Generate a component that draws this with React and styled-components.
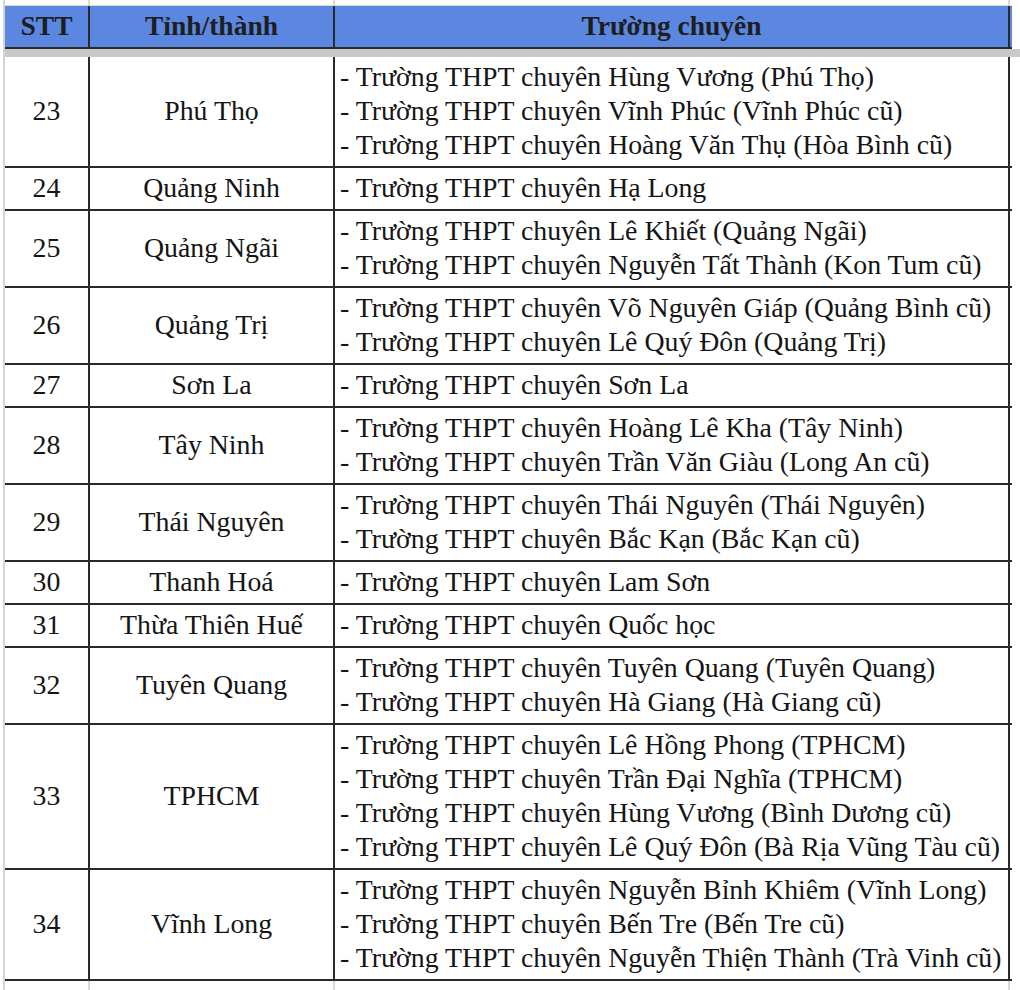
import React from 'react'
import styled, { createGlobalStyle } from 'styled-components'

const GlobalStyle = createGlobalStyle`
  html, body {
    margin: 0;
    padding: 0;
    background: #ffffff;
  }
  body {
    font-family: "Liberation Serif", "Times New Roman", serif;
    color: #111;
  }
`

const COLS = '85px 245px 675px'

const Sheet = styled.div`
  width: 1020px;
  height: 990px;
  overflow: hidden;
  box-sizing: border-box;
  padding-left: 3px;
  background: #fff;
`

const Frame = styled.div`
  border-left: 2px solid #d4d4d4;
  width: 1009px;
  height: 990px;
  box-sizing: border-box;
`

const GhostRow = styled.div`
  display: grid;
  grid-template-columns: ${COLS} 10px;
  height: ${({ $h }) => $h}px;
  border-bottom: ${({ $line }) => ($line ? '1px solid #d8d8d8' : 'none')};
`

const GhostCell = styled.div`
  border-right: 2px solid #dadada;
`

const HeaderRow = styled.div`
  display: grid;
  grid-template-columns: ${COLS};
  height: 43px;
  background: #5b87e1;
  border-bottom: 2px solid #2a2a2a;
  box-sizing: border-box;
  width: 1007px;
`

const HeaderCell = styled.div`
  display: flex;
  align-items: center;
  justify-content: center;
  font-weight: 700;
  font-size: 27.5px;
  color: #1e1e1e;
  border-right: 2px solid #2a2a2a;
  padding-bottom: 1px;
`

const FreezeBar = styled.div`
  height: 8px;
  background: #c9c9c9;
  width: 1020px;
`

const Row = styled.div`
  display: grid;
  grid-template-columns: ${COLS};
  border-bottom: 2px solid #2a2a2a;
  width: 1007px;
`

const Cell = styled.div`
  display: flex;
  flex-direction: column;
  justify-content: center;
  align-items: ${({ $left }) => ($left ? 'flex-start' : 'center')};
  padding: ${({ $left }) => ($left ? '3px 0 4px 5px' : '3px 4px 4px')};
  border-right: 2px solid #2a2a2a;
  font-size: 27.8px;
  line-height: 34px;
  color: #151515;
  white-space: nowrap;
`

const Line = styled.div``

const rows = [
  ['23', 'Phú Thọ', [
    'Trường THPT chuyên Hùng Vương (Phú Thọ)',
    'Trường THPT chuyên Vĩnh Phúc (Vĩnh Phúc cũ)',
    'Trường THPT chuyên Hoàng Văn Thụ (Hòa Bình cũ)',
  ]],
  ['24', 'Quảng Ninh', ['Trường THPT chuyên Hạ Long']],
  ['25', 'Quảng Ngãi', [
    'Trường THPT chuyên Lê Khiết (Quảng Ngãi)',
    'Trường THPT chuyên Nguyễn Tất Thành (Kon Tum cũ)',
  ]],
  ['26', 'Quảng Trị', [
    'Trường THPT chuyên Võ Nguyên Giáp (Quảng Bình cũ)',
    'Trường THPT chuyên Lê Quý Đôn (Quảng Trị)',
  ]],
  ['27', 'Sơn La', ['Trường THPT chuyên Sơn La']],
  ['28', 'Tây Ninh', [
    'Trường THPT chuyên Hoàng Lê Kha (Tây Ninh)',
    'Trường THPT chuyên Trần Văn Giàu (Long An cũ)',
  ]],
  ['29', 'Thái Nguyên', [
    'Trường THPT chuyên Thái Nguyên (Thái Nguyên)',
    'Trường THPT chuyên Bắc Kạn (Bắc Kạn cũ)',
  ]],
  ['30', 'Thanh Hoá', ['Trường THPT chuyên Lam Sơn']],
  ['31', 'Thừa Thiên Huế', ['Trường THPT chuyên Quốc học']],
  ['32', 'Tuyên Quang', [
    'Trường THPT chuyên Tuyên Quang (Tuyên Quang)',
    'Trường THPT chuyên Hà Giang (Hà Giang cũ)',
  ]],
  ['33', 'TPHCM', [
    'Trường THPT chuyên Lê Hồng Phong (TPHCM)',
    'Trường THPT chuyên Trần Đại Nghĩa (TPHCM)',
    'Trường THPT chuyên Hùng Vương (Bình Dương cũ)',
    'Trường THPT chuyên Lê Quý Đôn (Bà Rịa Vũng Tàu cũ)',
  ]],
  ['34', 'Vĩnh Long', [
    'Trường THPT chuyên Nguyễn Bỉnh Khiêm (Vĩnh Long)',
    'Trường THPT chuyên Bến Tre (Bến Tre cũ)',
    'Trường THPT chuyên Nguyễn Thiện Thành (Trà Vinh cũ)',
  ]],
]

export default function App() {
  return (
    <>
      <GlobalStyle />
      <Sheet>
        <Frame>
          <GhostRow $h={5} $line>
            <GhostCell />
            <GhostCell />
            <GhostCell />
          </GhostRow>
          <HeaderRow>
            <HeaderCell>STT</HeaderCell>
            <HeaderCell>Tỉnh/thành</HeaderCell>
            <HeaderCell>Trường chuyên</HeaderCell>
          </HeaderRow>
          <FreezeBar />
          {rows.map(([no, province, schools]) => (
            <Row key={no}>
              <Cell>{no}</Cell>
              <Cell>{province}</Cell>
              <Cell $left>
                {schools.map((s) => (
                  <Line key={s}>- {s}</Line>
                ))}
              </Cell>
            </Row>
          ))}
          <GhostRow $h={20}>
            <GhostCell />
            <GhostCell />
            <GhostCell />
          </GhostRow>
        </Frame>
      </Sheet>
    </>
  )
}
